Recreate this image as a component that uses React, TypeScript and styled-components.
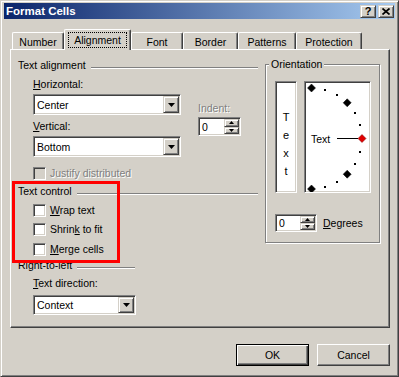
import React from 'react';
import styled, { createGlobalStyle, css } from 'styled-components';

const FACE = '#D4D0C8';
const SHADOW = '#808080';
const DARK = '#404040';

const Global = createGlobalStyle`
  html, body { margin: 0; padding: 0; background: ${FACE}; }
  body {
    font-family: "Liberation Sans", Arial, sans-serif;
    font-size: 10.5px;
    color: #000;
  }
  * { box-sizing: border-box; }
`;

const sunken = css`
  border: 1px solid;
  border-color: ${SHADOW} #fff #fff ${SHADOW};
  box-shadow: inset 1px 1px 0 ${DARK}, inset -1px -1px 0 ${FACE};
  padding: 1px;
`;

const raised = css`
  border: 1px solid;
  border-color: ${FACE} ${DARK} ${DARK} ${FACE};
  box-shadow: inset 1px 1px 0 #fff, inset -1px -1px 0 ${SHADOW};
  background: ${FACE};
`;

const Window = styled.div`
  position: relative;
  width: 399px;
  height: 377px;
  background: ${FACE};
  border: 1px solid;
  border-color: ${FACE} ${DARK} ${DARK} ${FACE};
  box-shadow: inset 1px 1px 0 #fff, inset -1px -1px 0 ${SHADOW};
  padding: 2px 3px 3px 3px;
  display: flex;
  flex-direction: column;
`;

const Caption = styled.div`
  height: 16px;
  display: flex;
  align-items: center;
  background: linear-gradient(to right, #0a246a, #a6caf0);
  padding: 0 1px 0 2px;
`;

const CaptionText = styled.span`
  flex: 1;
  color: #fff;
  font-weight: bold;
  font-size: 11.5px;
  line-height: 16px;
`;

const CaptionButton = styled.div<{ $gap?: number }>`
  ${raised};
  width: 16px;
  height: 13px;
  margin-left: ${(p) => p.$gap ?? 0}px;
  display: flex;
  align-items: center;
  justify-content: center;
  font-weight: bold;
  font-size: 11px;
  line-height: 11px;
`;

const TabArea = styled.div`
  margin: 10px 0 0 6px;
  width: 380px;
`;

const TabRow = styled.div`
  display: flex;
  align-items: flex-end;
  height: 20px;
  padding-left: 2px;
`;

const Tab = styled.div<{ $w: number; $active?: boolean }>`
  width: ${(p) => p.$w}px;
  height: ${(p) => (p.$active ? 21 : 17)}px;
  margin-bottom: ${(p) => (p.$active ? -1 : 0)}px;
  position: relative;
  z-index: ${(p) => (p.$active ? 1 : 0)};
  background: ${FACE};
  border-top: 1px solid #fff;
  border-left: 1px solid #fff;
  border-right: 1px solid ${DARK};
  border-radius: 2px 2px 0 0;
  box-shadow: inset -1px 0 0 ${SHADOW};
  display: flex;
  justify-content: center;
  align-items: flex-start;
  padding-top: ${(p) => (p.$active ? 2 : 3)}px;
  line-height: 12px;
`;

const FocusRect = styled.span`
  border: 1px dotted #000;
  padding: 1px 5px;
  line-height: 12px;
`;

const Panel = styled.div`
  width: 380px;
  height: 279px;
  border-top: 1px solid #fff;
  border-left: 1px solid #fff;
  border-right: 1px solid ${DARK};
  border-bottom: 1px solid ${DARK};
  box-shadow: inset -1px -1px 0 ${SHADOW};
  display: flex;
  align-items: flex-start;
  padding: 8px 0 0 7px;
`;

const LeftCol = styled.div`
  width: 240px;
  padding-top: 1px;
  display: flex;
  flex-direction: column;
`;

const GroupHeader = styled.div<{ $w?: number; $mt?: number }>`
  display: flex;
  align-items: center;
  height: 13px;
  line-height: 13px;
  width: ${(p) => (p.$w ? `${p.$w}px` : 'auto')};
  margin-top: ${(p) => p.$mt ?? 0}px;
  white-space: nowrap;
`;

const Rule = styled.div`
  flex: 1;
  height: 2px;
  margin-left: 5px;
  margin-top: 4px;
  border-top: 1px solid ${SHADOW};
  border-bottom: 1px solid #fff;
`;

const Indented = styled.div`
  padding-left: 15px;
  display: flex;
  flex-direction: column;
`;

const AlignBlock = styled.div`
  display: flex;
  padding-left: 15px;
`;

const FieldCol = styled.div`
  width: 148px;
  display: flex;
  flex-direction: column;
`;

const IndentCol = styled.div`
  margin-left: 17px;
  padding-top: 30px;
  display: flex;
  flex-direction: column;
`;

const Label = styled.div<{ $mt?: number; $disabled?: boolean }>`
  height: 13px;
  line-height: 13px;
  margin-top: ${(p) => p.$mt ?? 0}px;
  white-space: nowrap;
  ${(p) =>
    p.$disabled &&
    css`
      color: ${SHADOW};
      text-shadow: 1px 1px 0 #fff;
    `}
`;

const Combo = styled.div<{ $w: number; $h: number; $mt?: number }>`
  ${sunken};
  width: ${(p) => p.$w}px;
  height: ${(p) => p.$h}px;
  margin-top: ${(p) => p.$mt ?? 0}px;
  background: #fff;
  display: flex;
`;

const ComboText = styled.div`
  flex: 1;
  display: flex;
  align-items: center;
  padding-left: 2px;
`;

const DropButton = styled.div`
  ${raised};
  width: 16px;
  display: flex;
  align-items: center;
  justify-content: center;
`;

const SpinBox = styled.div<{ $w: number; $h: number; $mt?: number }>`
  ${sunken};
  width: ${(p) => p.$w}px;
  height: ${(p) => p.$h}px;
  margin-top: ${(p) => p.$mt ?? 0}px;
  background: #fff;
  display: flex;
`;

const SpinValue = styled.div`
  flex: 1;
  display: flex;
  align-items: center;
  padding-left: 2px;
`;

const SpinButtons = styled.div`
  width: 15px;
  display: flex;
  flex-direction: column;
`;

const SpinButton = styled.div`
  ${raised};
  flex: 1;
  display: flex;
  align-items: center;
  justify-content: center;
`;

const CheckRow = styled.div<{ $mt?: number; $disabled?: boolean }>`
  display: flex;
  align-items: center;
  height: 13px;
  line-height: 13px;
  margin-top: ${(p) => p.$mt ?? 0}px;
  white-space: nowrap;
  ${(p) =>
    p.$disabled &&
    css`
      color: ${SHADOW};
      text-shadow: 1px 1px 0 #fff;
    `}
`;

const CheckBox = styled.div<{ $disabled?: boolean }>`
  ${sunken};
  width: 13px;
  height: 13px;
  margin-right: 4px;
  background: ${(p) => (p.$disabled ? FACE : '#fff')};
`;

const GroupBox = styled.div`
  margin: 6px 0 0 7px;
  width: 115px;
  border: 1px solid ${SHADOW};
  box-shadow: inset 1px 1px 0 #fff, 1px 1px 0 #fff;
  padding: 0 8px 10px 9px;
  display: flex;
  flex-direction: column;
`;

const Legend = styled.div`
  align-self: flex-start;
  margin: -7px 0 0 -6px;
  padding: 0 2px;
  height: 13px;
  line-height: 13px;
  background: ${FACE};
`;

const OrientRow = styled.div`
  display: flex;
  margin-top: 10px;
  gap: 7px;
`;

const VertTextBox = styled.div`
  ${sunken};
  width: 22px;
  height: 112px;
  background: #fff;
  display: flex;
  flex-direction: column;
  align-items: center;
  padding-top: 26px;
`;

const VertLetter = styled.span`
  line-height: 18px;
  height: 18px;
  font-size: 11px;
`;

const DialBox = styled.div`
  ${sunken};
  padding: 0;
  width: 67px;
  height: 112px;
  background: #fff;
  display: flex;
`;

const DegreeRow = styled.div`
  display: flex;
  align-items: center;
  margin-top: 21px;
  gap: 6px;
`;

const ButtonRow = styled.div`
  display: flex;
  justify-content: flex-end;
  gap: 8px;
  margin-top: 16px;
  padding-right: 5px;
`;

const PushButton = styled.div<{ $default?: boolean }>`
  width: 73px;
  height: 22px;
  display: flex;
  align-items: center;
  justify-content: center;
  background: ${FACE};
  ${(p) =>
    p.$default
      ? css`
          border: 1px solid #000;
          box-shadow: inset 1px 1px 0 #fff, inset -1px -1px 0 ${DARK},
            inset -2px -2px 0 ${SHADOW};
        `
      : css`
          border: 1px solid;
          border-color: #fff ${DARK} ${DARK} #fff;
          box-shadow: inset -1px -1px 0 ${SHADOW};
        `}
`;

const Annotation = styled.div`
  position: absolute;
  left: 11px;
  top: 180px;
  width: 108px;
  height: 82px;
  border: 3px solid #ff0000;
  pointer-events: none;
`;

const DownArrow = () => (
  <svg width="7" height="4" viewBox="0 0 7 4">
    <polygon points="0,0 7,0 3.5,4" fill="#000" />
  </svg>
);

const SmallArrow = ({ up }: { up?: boolean }) => (
  <svg width="5" height="3" viewBox="0 0 5 3">
    <polygon points={up ? '0,3 5,3 2.5,0' : '0,0 5,0 2.5,3'} fill="#000" />
  </svg>
);

const Spinner = ({ w, h, mt }: { w: number; h: number; mt?: number }) => (
  <SpinBox $w={w} $h={h} $mt={mt}>
    <SpinValue>0</SpinValue>
    <SpinButtons>
      <SpinButton>
        <SmallArrow up />
      </SpinButton>
      <SpinButton>
        <SmallArrow />
      </SpinButton>
    </SpinButtons>
  </SpinBox>
);

const ComboBox = ({ value, w, h, mt }: { value: string; w: number; h: number; mt?: number }) => (
  <Combo $w={w} $h={h} $mt={mt}>
    <ComboText>{value}</ComboText>
    <DropButton>
      <DownArrow />
    </DropButton>
  </Combo>
);

const Diamond = ({ x, y, color = '#000' }: { x: number; y: number; color?: string }) => (
  <polygon
    points={`${x},${y - 4} ${x + 4},${y} ${x},${y + 4} ${x - 4},${y}`}
    fill={color}
    stroke={color === '#000' ? '#000' : '#700'}
    strokeWidth="0.5"
  />
);

const Dial = () => {
  const cx = 6.5;
  const cy = 56.5;
  const r = 50.5;
  const marks = [90, 75, 60, 45, 30, 15, 0, -15, -30, -45, -60, -75, -90];
  return (
    <svg width="65" height="110" viewBox="0 0 65 110">
      {marks.map((a) => {
        const rad = (a * Math.PI) / 180;
        const x = cx + r * Math.cos(rad);
        const y = cy - r * Math.sin(rad);
        if (a === 0) return <Diamond key={a} x={x} y={y} color="#e00000" />;
        if (a % 45 === 0) return <Diamond key={a} x={x} y={y} />;
        return <rect key={a} x={Math.round(x - 1)} y={Math.round(y - 1)} width="2" height="2" fill="#000" />;
      })}
      <text x="6" y="60.5" fontFamily="Liberation Sans, Arial, sans-serif" fontSize="10.5" fill="#000">
        Text
      </text>
      <line x1="32" y1="56.5" x2="53" y2="56.5" stroke="#000" strokeWidth="1" />
    </svg>
  );
};

const tabs = [
  { label: 'Number', w: 52 },
  { label: 'Alignment', w: 67, active: true },
  { label: 'Font', w: 52 },
  { label: 'Border', w: 55 },
  { label: 'Patterns', w: 58 },
  { label: 'Protection', w: 66 },
];

export default function App() {
  return (
    <>
      <Global />
      <Window>
        <Caption>
          <CaptionText>Format Cells</CaptionText>
          <CaptionButton>?</CaptionButton>
          <CaptionButton $gap={2}>
            <svg width="8" height="7" viewBox="0 0 8 7">
              <path d="M0.5 0.5L7.5 6.5M7.5 0.5L0.5 6.5" stroke="#000" strokeWidth="1.7" />
            </svg>
          </CaptionButton>
        </Caption>
        <TabArea>
          <TabRow>
            {tabs.map((t) => (
              <Tab key={t.label} $w={t.w} $active={t.active}>
                {t.active ? <FocusRect>{t.label}</FocusRect> : t.label}
              </Tab>
            ))}
          </TabRow>
          <Panel>
            <LeftCol>
              <GroupHeader>
                Text alignment
                <Rule />
              </GroupHeader>
              <AlignBlock>
                <FieldCol>
                  <Label $mt={6}>
                    <u>H</u>orizontal:
                  </Label>
                  <ComboBox value="Center" w={148} h={21} mt={3} />
                  <Label $mt={5}>
                    <u>V</u>ertical:
                  </Label>
                  <ComboBox value="Bottom" w={148} h={21} mt={3} />
                </FieldCol>
                <IndentCol>
                  <Label $disabled>Indent:</Label>
                  <Spinner w={43} h={19} mt={2} />
                </IndentCol>
              </AlignBlock>
              <Indented>
                <CheckRow $mt={10} $disabled>
                  <CheckBox $disabled />
                  Justify distributed
                </CheckRow>
              </Indented>
              <GroupHeader $mt={5}>
                Text control
                <Rule />
              </GroupHeader>
              <Indented>
                <CheckRow $mt={6}>
                  <CheckBox />
                  <span>
                    <u>W</u>rap text
                  </span>
                </CheckRow>
                <CheckRow $mt={6}>
                  <CheckBox />
                  <span>
                    Shrin<u>k</u> to fit
                  </span>
                </CheckRow>
                <CheckRow $mt={7}>
                  <CheckBox />
                  <span>
                    <u>M</u>erge cells
                  </span>
                </CheckRow>
              </Indented>
              <GroupHeader $w={117} $mt={3}>
                Right-to-left
                <Rule />
              </GroupHeader>
              <Indented>
                <Label $mt={5}>
                  <u>T</u>ext direction:
                </Label>
                <ComboBox value="Context" w={103} h={20} mt={5} />
              </Indented>
            </LeftCol>
            <GroupBox>
              <Legend>Orientation</Legend>
              <OrientRow>
                <VertTextBox>
                  <VertLetter>T</VertLetter>
                  <VertLetter>e</VertLetter>
                  <VertLetter>x</VertLetter>
                  <VertLetter>t</VertLetter>
                </VertTextBox>
                <DialBox>
                  <Dial />
                </DialBox>
              </OrientRow>
              <DegreeRow>
                <Spinner w={42} h={18} />
                <span>
                  <u>D</u>egrees
                </span>
              </DegreeRow>
            </GroupBox>
          </Panel>
        </TabArea>
        <ButtonRow>
          <PushButton $default>OK</PushButton>
          <PushButton>Cancel</PushButton>
        </ButtonRow>
        <Annotation />
      </Window>
    </>
  );
}
